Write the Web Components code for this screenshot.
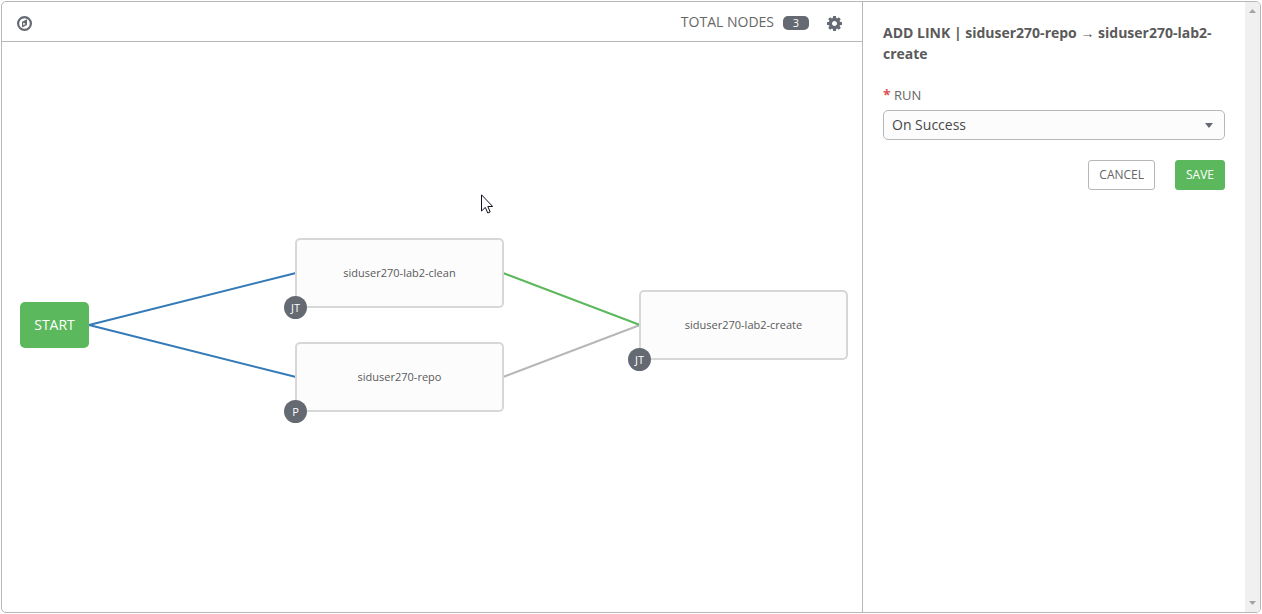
<!DOCTYPE html>
<html lang="en">
<head>
<meta charset="utf-8">
<meta name="viewport" content="width=device-width, initial-scale=1">
<title>Workflow Visualizer</title>
<style>
  html, body { height: 100%; }
  body {
    margin: 0;
    box-sizing: border-box;
    padding: 1px;
    background: #fff;
    color: #5a5a5a;
    font: 14px/20px "Open Sans", "Noto Sans", sans-serif;
  }
</style>
</head>
<body>
<workflow-maker></workflow-maker>

<template id="maker-template">
  <style>
    :host {
      display: flex;
      box-sizing: border-box;
      height: 100%;
      border: 1px solid #b7b7b7;
      border-radius: 5px;
      overflow: hidden;
    }
    main { flex: 1; min-width: 0; display: flex; flex-direction: column; }
    workflow-graph { flex: 1; }
  </style>
  <main>
    <workflow-toolbar total="3"></workflow-toolbar>
    <workflow-graph></workflow-graph>
  </main>
  <link-form>
    ADD LINK | siduser270-repo → siduser270-lab2-create
  </link-form>
</template>

<template id="toolbar-template">
  <style>
    :host {
      display: flex;
      align-items: center;
      justify-content: space-between;
      height: 39px;
      padding: 0 20px 0 15px;
      border-bottom: 1px solid #b7b7b7;
      color: #646972;
    }
    button { display: block; margin-top: 3px; padding: 0; border: 0; background: none; color: inherit; }
    svg { display: block; width: 15px; height: 15px; fill: currentColor; }
    .group { display: flex; align-items: center; color: #666; }
    .count {
      margin: 2px 18px 0 9px;
      width: 26px;
      height: 14px;
      border-radius: 5px;
      background: #646972;
      color: #fff;
      font-size: 11px;
      line-height: 14px;
      text-align: center;
    }
    .group button { color: #646972; }
  </style>
  <button type="button" aria-label="Graph controls">
    <svg viewBox="128 128 1536 1536" aria-hidden="true"><path fill-rule="evenodd" d="M896 128a768 768 0 1 0 0 1536a768 768 0 1 0 0-1536zM896 352a544 544 0 1 1 0 1088a544 544 0 1 1 0-1088zM1152 448v592l-512 256v-592zM768 786v300l256-128z"/></svg>
  </button>
  <div class="group">
    <span>TOTAL NODES</span>
    <span class="count"></span>
    <button type="button" aria-label="Settings">
      <svg viewBox="128 128 1536 1536" aria-hidden="true"><path d="M1152 896q0-106-75-181t-181-75-181 75-75 181 75 181 181 75 181-75 75-181zm512-109v222q0 12-8 23t-20 13l-185 28q-19 54-39 91 35 50 107 138 10 12 10 25t-9 23q-27 37-99 108t-94 71q-12 0-26-9l-138-108q-44 23-91 38-16 136-29 186-7 28-36 28h-222q-14 0-24.5-8.5t-11.5-21.5l-28-184q-49-16-90-37l-141 107q-10 9-25 9-14 0-25-11-126-114-165-168-7-10-7-23 0-12 8-23 15-21 51-66.5t54-70.5q-27-50-41-99l-183-27q-13-2-21-12.5t-8-23.5v-222q0-12 8-23t19-13l186-28q14-46 39-92-40-57-107-138-10-12-10-24 0-10 9-23 26-36 98.5-107.5t94.5-71.5q13 0 26 10l138 107q44-23 91-38 16-136 29-186 7-28 36-28h222q14 0 24.5 8.5t11.5 21.5l28 184q49 16 90 37l142-107q9-9 24-9 13 0 25 10 129 119 165 170 7 8 7 22 0 12-8 23-15 21-51 66.5t-54 70.5q26 50 41 98l183 28q13 2 21 12.5t8 23.5z"/></svg>
    </button>
  </div>
</template>

<template id="graph-template">
  <style>
    :host { display: block; position: relative; overflow: hidden; }
    .links { position: absolute; left: 0; top: 0; width: 100%; height: 100%; fill: none; stroke-width: 2; }
    .start {
      position: absolute;
      left: 18px;
      top: 260px;
      width: 69px;
      height: 46px;
      padding: 0;
      border: 0;
      border-radius: 5px;
      background: #5cb85c;
      color: #fff;
      font: inherit;
    }
    workflow-node { position: absolute; }
    .clean { left: 293px; top: 196px; }
    .repo { left: 293px; top: 300px; }
    .create { left: 637px; top: 248px; }
    .pointer { position: absolute; left: 479px; top: 152px; width: 12px; height: 20px; }
  </style>
  <svg class="links" aria-hidden="true">
    <path stroke="#337ab7" d="M294 231L87 283L294 335"/>
    <path stroke="#b7b7b7" d="M501 335L638 283"/>
    <path stroke="#5cb85c" d="M501 231L638 283"/>
  </svg>
  <button type="button" class="start">START</button>
  <workflow-node class="clean" type="JT">siduser270-lab2-clean</workflow-node>
  <workflow-node class="repo" type="P">siduser270-repo</workflow-node>
  <workflow-node class="create" type="JT">siduser270-lab2-create</workflow-node>
  <svg class="pointer" viewBox="0 0 12 20" aria-hidden="true"><path fill="#fff" stroke="#101020" d="M.5.8V17l3.8-3.6 2.5 5.6 2.4-1-2.4-5.5h4.9z"/></svg>
</template>

<template id="node-template">
  <style>
    :host {
      display: grid;
      place-items: center;
      box-sizing: border-box;
      width: 209px;
      height: 70px;
      border: 2px solid #d7d7d7;
      border-radius: 5px;
      background: #fcfcfc;
      font-size: 11px;
      line-height: 16px;
    }
    .type {
      position: absolute;
      left: -13px;
      bottom: -13px;
      width: 23px;
      height: 23px;
      border-radius: 50%;
      background: #646972;
      color: #fff;
      line-height: 23px;
      text-align: center;
    }
  </style>
  <span><slot></slot></span>
  <span class="type"></span>
</template>

<template id="form-template">
  <style>
    :host {
      display: flex;
      box-sizing: border-box;
      width: 398px;
      flex: none;
      border-left: 1px solid #b7b7b7;
    }
    form { flex: 1; min-width: 0; padding: 20px; }
    h1 {
      margin: 0 0 20px;
      font: 700 14px/21px "Open Sans", "Liberation Serif", sans-serif;
    }
    label { display: block; margin-bottom: 4px; font-size: 13px; line-height: 22px; color: #666; }
    .required { color: #d9534f; font-size: 14px; font-weight: 700; }
    .field { display: grid; align-items: center; margin-bottom: 20px; }
    .field > * { grid-area: 1 / 1; }
    select {
      appearance: none;
      box-sizing: border-box;
      width: 100%;
      height: 30px;
      padding: 0 8px;
      border: 1px solid #b7b7b7;
      border-radius: 5px;
      background: #fcfcfc;
      color: #484848;
      font: inherit;
    }
    .caret { justify-self: end; margin-right: 12px; width: 8px; height: 5px; fill: #646972; pointer-events: none; }
    .actions { display: flex; justify-content: flex-end; gap: 20px; }
    .actions button {
      height: 30px;
      padding: 0 10px 2px;
      border: 1px solid #b7b7b7;
      border-radius: 3px;
      background: #fff;
      color: #666;
      font-family: inherit;
      font-size: 12px;
    }
    .actions .save { border-color: #5cb85c; background: #5cb85c; color: #fff; }
    .rail {
      display: flex;
      flex-direction: column;
      justify-content: space-between;
      align-items: center;
      box-sizing: border-box;
      width: 15px;
      padding: 7px 0;
      background: #f0f0f0;
    }
    .rail svg { width: 7px; height: 4px; fill: #a3a3a3; }
  </style>
  <form>
    <h1><slot></slot></h1>
    <label for="run"><span class="required">*</span> RUN</label>
    <div class="field">
      <select id="run">
        <option>On Success</option>
        <option>On Failure</option>
        <option>Always</option>
      </select>
      <svg class="caret" viewBox="0 0 8 5" aria-hidden="true"><path d="M0 0h8L4 5z"/></svg>
    </div>
    <div class="actions">
      <button type="button">CANCEL</button>
      <button type="button" class="save">SAVE</button>
    </div>
  </form>
  <div class="rail" aria-hidden="true">
    <svg viewBox="0 0 7 4"><path d="M0 4h7L3.500 0z"/></svg>
    <svg viewBox="0 0 7 4"><path d="M0 0h7L3.500 4z"/></svg>
  </div>
</template>

<script>
  class TemplateElement extends HTMLElement {
    constructor() {
      super();
      const template = document.getElementById(this.constructor.template);
      this.attachShadow({ mode: "open" }).append(document.importNode(template.content, true));
    }
  }

  class WorkflowNode extends TemplateElement {
    static template = "node-template";
    connectedCallback() {
      this.shadowRoot.querySelector(".type").textContent = this.getAttribute("type");
    }
  }

  class WorkflowToolbar extends TemplateElement {
    static template = "toolbar-template";
    connectedCallback() {
      this.shadowRoot.querySelector(".count").textContent = this.getAttribute("total");
    }
  }

  class WorkflowGraph extends TemplateElement { static template = "graph-template"; }
  class LinkForm extends TemplateElement { static template = "form-template"; }
  class WorkflowMaker extends TemplateElement { static template = "maker-template"; }

  customElements.define("workflow-node", WorkflowNode);
  customElements.define("workflow-toolbar", WorkflowToolbar);
  customElements.define("workflow-graph", WorkflowGraph);
  customElements.define("link-form", LinkForm);
  customElements.define("workflow-maker", WorkflowMaker);
</script>
</body>
</html>
